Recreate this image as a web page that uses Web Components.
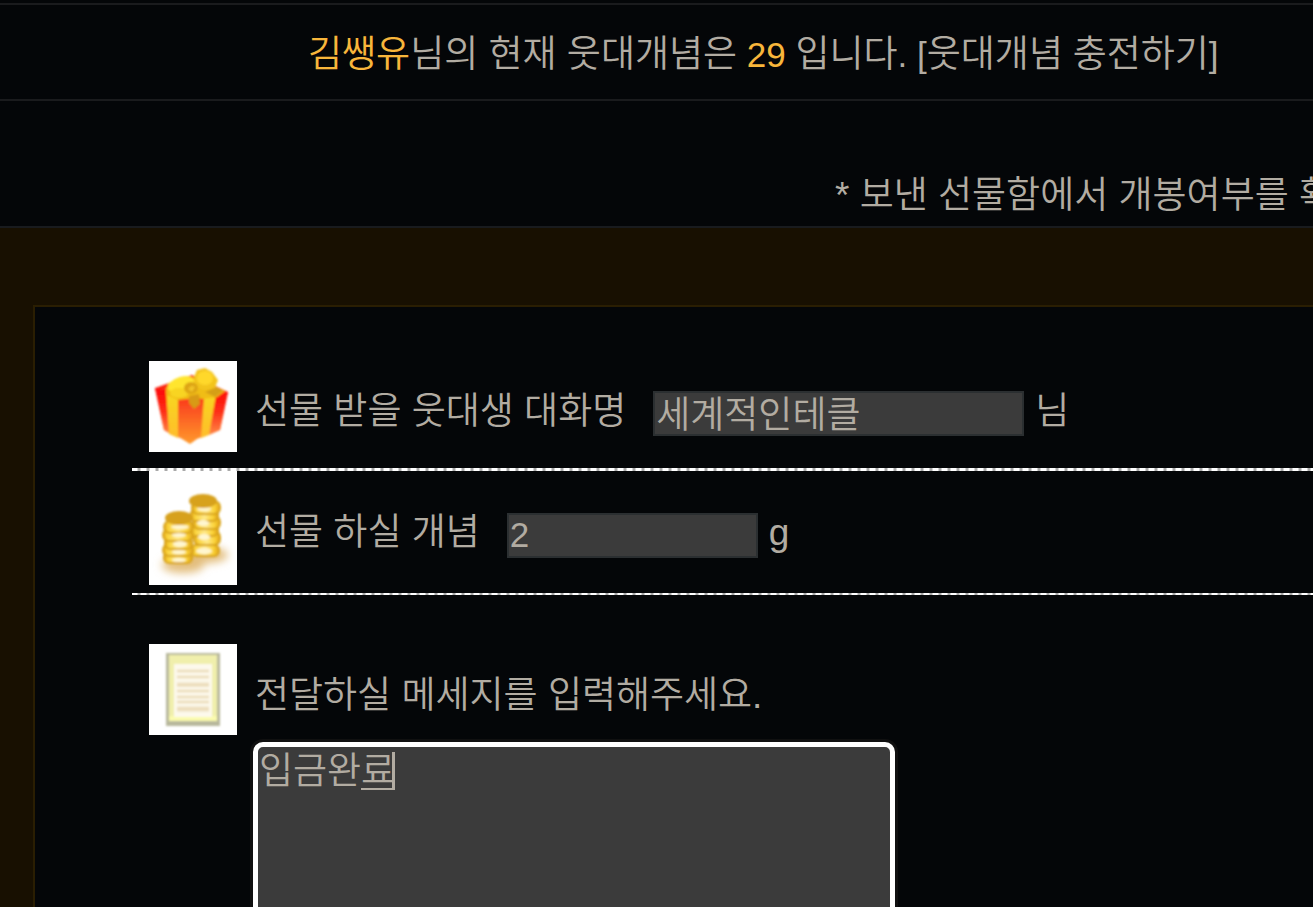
<!DOCTYPE html>
<html lang="ko">
<head>
<meta charset="utf-8">
<meta name="viewport" content="width=device-width, initial-scale=1">
<title>개념 선물하기</title>
<style>
  body {
    --accent: #f8b63b;
    --ink: #b2aca2;
    --page: #040608;
    --latin-size: 35px;
    background: var(--page);
    color: var(--ink);
    font: 350 37px/54px "Liberation Sans", "Noto Sans CJK KR", sans-serif;
    margin: 0;
    overflow-x: hidden;
    padding-top: 3px;
  }
</style>
</head>
<body>

<concept-status name="김쌩유" amount="29"></concept-status>
<gift-notice>* 보낸 선물함에서 개봉여부를 확</gift-notice>
<gift-panel>
  <gift-row line="thick">
    <gift-icon slot="icon" name="box"></gift-icon>
    <gift-field label="선물 받을 웃대생 대화명" value="세계적인테클" unit="님" size="wide"></gift-field>
  </gift-row>
  <gift-row line="thin">
    <gift-icon slot="icon" name="coins"></gift-icon>
    <gift-field label="선물 하실 개념" value="2" unit="g"></gift-field>
  </gift-row>
  <gift-message label="전달하실 메세지를 입력해주세요." value="입금완료"></gift-message>
</gift-panel>

<script>
const icons = {
  box: `
    <svg viewBox="0 0 88 91" width="88" height="91" aria-hidden="true">
      <defs>
        <linearGradient id="red" x2="0" y2="1">
          <stop offset="0" stop-color="#fb0b08"/><stop offset=".45" stop-color="#fb4b20"/><stop offset="1" stop-color="#ff9a2c"/>
        </linearGradient>
        <linearGradient id="side" x2="0" y2="1">
          <stop offset="0" stop-color="#fd0505"/><stop offset=".5" stop-color="#fd2f18"/><stop offset="1" stop-color="#ff8a45"/>
        </linearGradient>
        <linearGradient id="gold" x2="0" y2="1">
          <stop offset="0" stop-color="#f7d91f"/><stop offset="1" stop-color="#ffbd2b"/>
        </linearGradient>
        <filter id="soft"><feGaussianBlur stdDeviation="1.1"/></filter>
      </defs>
      <g filter="url(#soft)">
        <path d="M6 27 43 14 79 31 71 69 48 78 41 83 33 78 15 69z" fill="url(#red)"/>
        <path d="M6 27 22 31 23 74 15 69zM79 31 66 34 60 74 71 69z" fill="url(#side)"/>
        <path d="M17 29 29 36 29 77 20 73zM55 36 67 34 60 74 52 77z" fill="url(#gold)"/>
        <path d="M17 27 32 17 43 18 61 24 76 30 68 36 54 38 47 37 29 39 18 34z" fill="#f0bd17"/>
        <ellipse cx="32" cy="23" rx="14" ry="7" fill="#ffe52d" transform="rotate(-18 32 23)"/>
        <ellipse cx="30" cy="32" rx="9" ry="5" fill="#f8d423"/>
        <path d="M44 18 48 9 56 7 63 11 69 19 66 27 55 29 47 26z" fill="#f3c41f"/>
        <ellipse cx="56" cy="17" rx="8" ry="7" fill="#ffd82c"/>
        <ellipse cx="42" cy="27" rx="7" ry="6" fill="#dda416"/>
        <path d="M39 28q3-5 7-2l-3 5z" fill="#f3c427"/>
        <path d="M40 35 50 33 51 43 45 48 40 42z" fill="#d89a16"/>
        <path d="m56 31 12-5 6 4-8 6z" fill="#d59f12"/>
      </g>
    </svg>`,
  coins: `
    <svg viewBox="0 0 88 114" width="88" height="114" aria-hidden="true">
      <defs>
        <filter id="shade" x="-30%" y="-50%" width="160%" height="200%"><feGaussianBlur stdDeviation="4"/></filter>
        <filter id="soft"><feGaussianBlur stdDeviation="1.1"/></filter>
        <linearGradient id="edge">
          <stop offset="0" stop-color="#e0a51c"/><stop offset=".15" stop-color="#fbd43a"/><stop offset=".5" stop-color="#ffe989"/>
          <stop offset=".8" stop-color="#fbd236"/><stop offset="1" stop-color="#dfa41a"/>
        </linearGradient>
      </defs>
      <g filter="url(#shade)" fill="#e3bd7b">
        <ellipse cx="56" cy="84" rx="23" ry="8"/><ellipse cx="34" cy="94" rx="21" ry="8"/>
      </g>
      <g filter="url(#soft)">
        <g fill="url(#edge)" stroke="#d9a41c" stroke-width="2">
          <rect x="42" y="74" width="28" height="11" rx="5"/><rect x="45" y="60" width="26" height="14" rx="6"/>
          <rect x="42" y="53" width="27" height="12" rx="5"/><rect x="44" y="45" width="27" height="13" rx="6"/>
          <rect x="42" y="38" width="27" height="12" rx="5"/><rect x="43" y="30" width="28" height="13" rx="6"/>
        </g>
        <g fill="#fff6d0">
          <ellipse cx="55" cy="38" rx="7" ry="2"/><ellipse cx="54" cy="52" rx="6" ry="3"/>
          <ellipse cx="55" cy="66" rx="6" ry="3"/><ellipse cx="55" cy="80" rx="8" ry="3"/>
        </g>
        <ellipse cx="54" cy="30" rx="14" ry="7" fill="#d7a11c"/>
        <g fill="url(#edge)" stroke="#d9a41c" stroke-width="2">
          <rect x="15" y="81" width="28" height="11" rx="5"/><rect x="14" y="73" width="30" height="12" rx="6"/>
          <rect x="16" y="66" width="27" height="12" rx="5"/><rect x="14" y="58" width="30" height="12" rx="6"/>
          <rect x="15" y="50" width="29" height="12" rx="6"/>
        </g>
        <g fill="#fff6d0">
          <ellipse cx="31" cy="56" rx="9" ry="2"/><ellipse cx="30" cy="64" rx="7" ry="2"/>
          <ellipse cx="31" cy="73" rx="7" ry="3"/><ellipse cx="30" cy="81" rx="7" ry="2"/><ellipse cx="30" cy="89" rx="7" ry="2"/>
        </g>
        <ellipse cx="30" cy="47" rx="14" ry="7" fill="#d7a11c"/>
      </g>
    </svg>`,
  note: `
    <svg viewBox="0 0 88 91" width="88" height="91" aria-hidden="true">
      <defs><filter id="soft"><feGaussianBlur stdDeviation=".8"/></filter></defs>
      <g filter="url(#soft)">
        <path d="M17 9h54v73H17z" fill="#b8b89c"/>
        <path d="M20 11h48v66H20z" fill="#f0efac"/>
        <path d="M20 72h48v5H20z" fill="#fbfbae"/>
        <path d="M25 20h38v53H25z" fill="#fdf9ec"/>
        <path d="M28 38h32v5H28zM28 62h32v6H28z" fill="#f3e9d3"/>
        <path d="M28 27h32M28 33h32M28 41h32M28 47h32M28 53h32M28 58h32M28 65h32" stroke="#ecdcb8" stroke-width="2.5"/>
      </g>
    </svg>`,
};

function render(host, styles, markup) {
  const tmpl = document.createElement('template');
  tmpl.innerHTML = `<style>${styles}</style>${markup}`;
  host.attachShadow({mode: 'open'}).appendChild(tmpl.content.cloneNode(true));
}

class ConceptStatus extends HTMLElement {
  connectedCallback() {
    render(this, `
      :host {
        border-bottom: 2px solid #1a1b1d;
        border-top: 2px solid #1a1b1d;
        display: block;
        padding: 23px 0 17px 308px;
        white-space: nowrap;
      }
      b {
        color: var(--accent);
        font-weight: inherit;
      }
      .amount {
        font-size: var(--latin-size);
        line-height: 1;
      }
      a {
        color: inherit;
        text-decoration: none;
      }
    `, `<b>${this.getAttribute('name')}</b>님의 현재 웃대개념은<span class="amount"> <b>${this.getAttribute('amount')}</b> </span>입니다<span class="amount">. </span><a href="#charge"><span class="amount">[</span>웃대개념<span class="amount"> </span>충전하기<span class="amount">]</span></a>`);
  }
}

class GiftNotice extends HTMLElement {
  connectedCallback() {
    render(this, `
      :host {
        border-bottom: 2px solid #191b1e;
        display: block;
        overflow: hidden;
        padding: 68px 0 3px 835px;
        white-space: nowrap;
      }
    `, `<slot></slot>`);
  }
}

class GiftPanel extends HTMLElement {
  connectedCallback() {
    render(this, `
      :host {
        background: #181001;
        display: block;
        padding: 77px 0 0 33px;
      }
      form {
        background: var(--page);
        border-left: 2px solid #2a1e02;
        border-top: 2px solid #2a1e02;
        padding: 54px 0 48px 97px;
      }
    `, `<form><slot></slot></form>`);
  }
}

class GiftIcon extends HTMLElement {
  connectedCallback() {
    render(this, `
      :host {
        background: #fff;
        display: block;
      }
      svg {
        display: block;
      }
    `, icons[this.getAttribute('name')]);
  }
}

class GiftRow extends HTMLElement {
  connectedCallback() {
    render(this, `
      :host {
        display: block;
      }
      .cells {
        align-items: center;
        display: flex;
        gap: 18px;
        padding-left: 17px;
      }
      .content {
        padding-top: 14px;
      }
      .line {
        background: repeating-linear-gradient(90deg, #fff 0 5px, #a9a9a9 6px 8px, #fff 9px);
      }
      :host([line="thick"]) .line {
        height: 3px;
        margin-top: 16px;
      }
      :host([line="thin"]) .line {
        height: 2px;
        margin-top: 8px;
      }
    `, `
      <div class="cells">
        <slot name="icon"></slot>
        <div class="content"><slot></slot></div>
      </div>
      <div class="line"></div>
    `);
  }
}

class GiftField extends HTMLElement {
  connectedCallback() {
    render(this, `
      :host {
        align-items: center;
        display: flex;
        white-space: nowrap;
      }
      label {
        margin: 0 27px 4px 0;
      }
      input {
        background: #3b3b3b;
        border: 2px solid #2b2f31;
        box-sizing: border-box;
        color: inherit;
        font: inherit;
        font-size: var(--latin-size);
        height: 45px;
        outline: 0;
        padding: 0 1px;
        width: 251px;
      }
      :host([size="wide"]) input {
        font-size: inherit;
        padding-top: 5px;
        width: 371px;
      }
      span {
        margin: 0 0 4px 11px;
      }
    `, `
      <label for="field">${this.getAttribute('label')}</label>
      <input id="field" type="text" value="${this.getAttribute('value')}">
      <span>${this.getAttribute('unit')}</span>
    `);
  }
}

class GiftMessage extends HTMLElement {
  connectedCallback() {
    render(this, `
      :host {
        display: block;
        padding: 49px 0 0 17px;
      }
      .head {
        align-items: center;
        display: flex;
        gap: 18px;
      }
      label {
        padding-top: 12px;
      }
      .box {
        margin: 7px 0 0 104px;
        position: relative;
        width: 642px;
      }
      textarea {
        background: #3b3b3b;
        border: 5px solid #fff;
        border-radius: 10px;
        box-shadow: 0 0 0 3px #101010;
        box-sizing: border-box;
        color: inherit;
        display: block;
        font: inherit;
        height: 240px;
        line-height: 45px;
        outline: 0;
        padding: 2px 1px;
        resize: none;
        width: 100%;
      }
      /* syllable still being composed: underline and caret */
      .compose {
        border-bottom: 2px solid var(--ink);
        border-right: 3px solid var(--ink);
        box-sizing: border-box;
        height: 38px;
        left: 108px;
        pointer-events: none;
        position: absolute;
        top: 10px;
        width: 34px;
      }
    `, `
      <div class="head">
        <gift-icon name="note"></gift-icon>
        <label for="message">${this.getAttribute('label')}</label>
      </div>
      <div class="box">
        <textarea id="message" spellcheck="false">${this.getAttribute('value')}</textarea>
        <div class="compose"></div>
      </div>
    `);
  }
}

customElements.define('concept-status', ConceptStatus);
customElements.define('gift-notice', GiftNotice);
customElements.define('gift-panel', GiftPanel);
customElements.define('gift-icon', GiftIcon);
customElements.define('gift-row', GiftRow);
customElements.define('gift-field', GiftField);
customElements.define('gift-message', GiftMessage);
</script>
</body>
</html>
